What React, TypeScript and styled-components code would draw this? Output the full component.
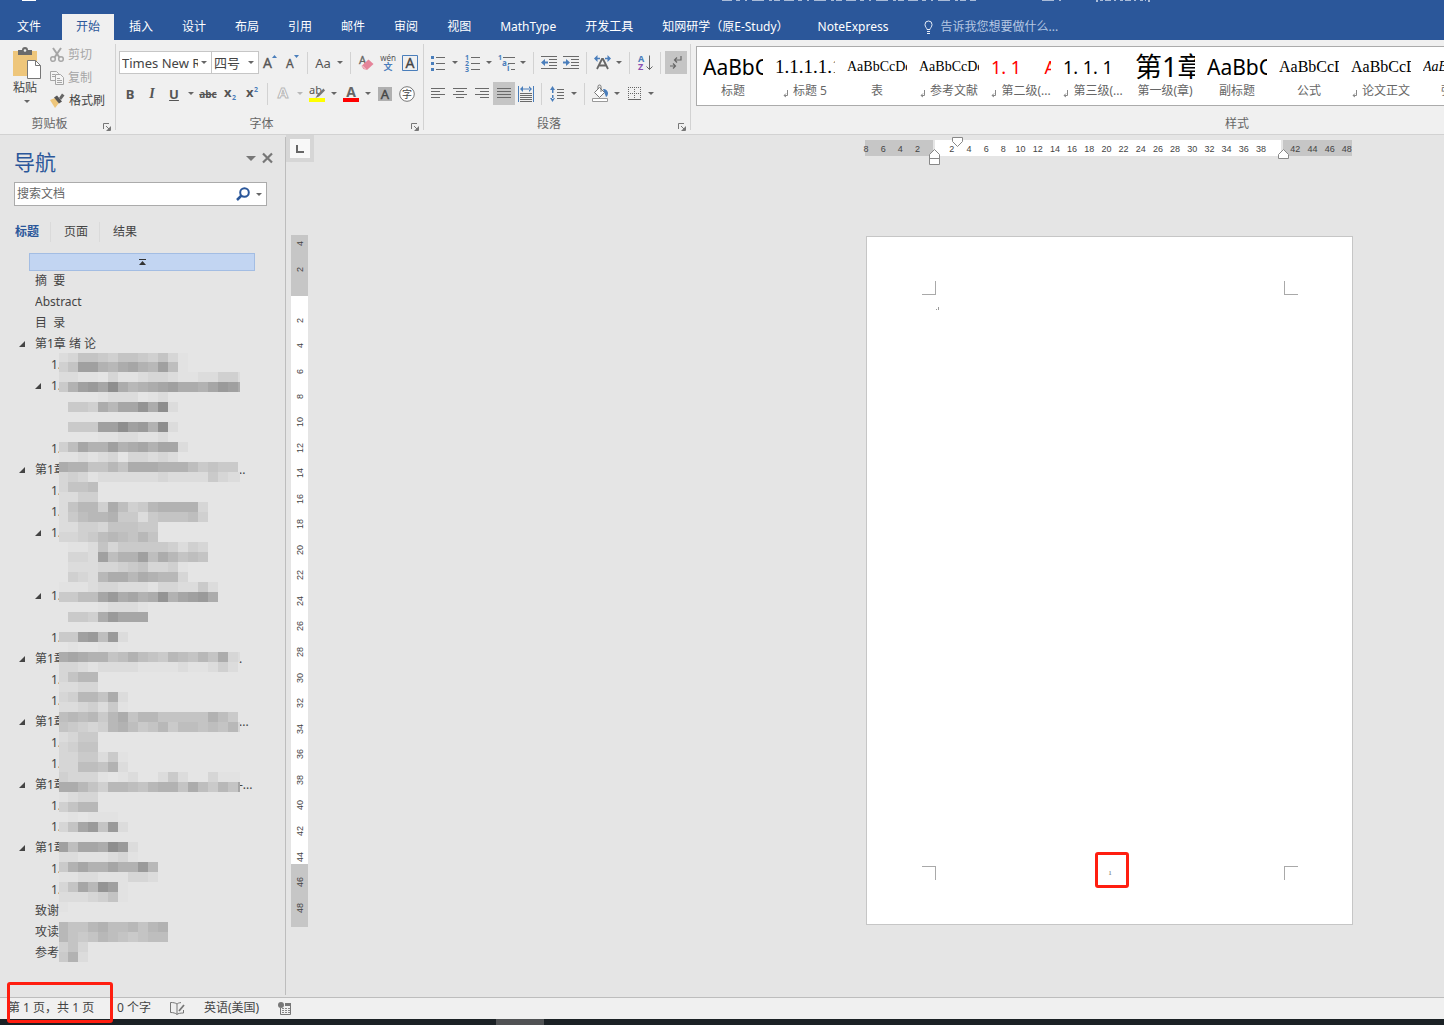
import React from "react";
import styled, { createGlobalStyle, css } from "styled-components";

const UI_FONT = `"Noto Sans", "Noto Sans CJK SC", sans-serif`;
const SERIF = `"Liberation Serif", "Noto Sans CJK SC", serif`;

const c = {
  brand: "#2b579a",
  ribbon: "#f0f0f0",
  line: "#d2d2d2",
  desk: "#e5e5e5",
  text: "#444444",
  muted: "#666666",
  disabled: "#a6a6a6",
  accent: "#4a7ebb",
  icon: "#6a6a6a",
  alert: "#ff1e10",
};

const Global = createGlobalStyle`
  *, *::before, *::after { box-sizing: border-box; }
  body { margin: 0; background: ${c.desk}; }
  button, input, select { font: inherit; color: inherit; }
  button { border: 0; padding: 0; background: none; cursor: default; }
  svg { display: block; flex: none; overflow: visible; }
`;

const Shell = styled.div`
  display: flex;
  flex-direction: column;
  min-height: 100vh;
  overflow: hidden;
  font: 12px/16px ${UI_FONT};
  color: ${c.text};
`;

/* ---------- title bar and ribbon tabs ---------- */

const Header = styled.header`
  display: flex;
  flex-direction: column;
  height: 40px;
  background: ${c.brand};
`;

const TitleStrip = styled.div`
  height: 14px;
  overflow: hidden;
`;

const TabBar = styled.nav`
  display: flex;
  height: 26px;
  gap: 1px;
  color: #fff;
`;

const Tab = styled.button<{ $active?: boolean; $file?: boolean }>`
  padding: 0 ${(p) => (p.$file ? 17 : 14)}px;
  margin-right: ${(p) => (p.$file ? 3 : 0)}px;
  white-space: nowrap;
  line-height: 24px;
  ${(p) =>
    p.$active &&
    css`
      background: ${c.ribbon};
      color: ${c.brand};
    `}
`;

const TellMe = styled.button`
  display: flex;
  align-items: center;
  gap: 6px;
  padding: 0 20px;
  white-space: nowrap;
  color: #b5c7e3;
`;

/* ---------- ribbon ---------- */

const Ribbon = styled.section`
  display: flex;
  height: 95px;
  padding-top: 4px;
  background: ${c.ribbon};
  border-bottom: 1px solid ${c.line};
`;

const Group = styled.div<{ $w?: number }>`
  display: flex;
  flex-direction: column;
  flex: ${(p) => (p.$w ? `0 0 ${p.$w}px` : "1 1 0")};
  min-width: 0;
  height: 86px;
  border-right: ${(p) => (p.$w ? `1px solid ${c.line}` : "0")};
`;

const GroupBody = styled.div`
  flex: 1;
  padding: 7px 0 0 3px;
`;

const GroupFoot = styled.div`
  display: flex;
  justify-content: center;
  position: relative;
  height: 16px;
  padding: 1px 16px 0 0;
  margin-bottom: -1px;
  color: ${c.muted};
`;

const StylesFoot = styled(GroupFoot)`
  justify-content: flex-end;
  margin-top: auto;
  padding-right: 195px;
`;

const Launcher = styled.button`
  position: absolute;
  right: 4px;
  bottom: 0;
`;

const ToolRow = styled.div`
  display: flex;
  align-items: center;
  height: 23px;
  margin-bottom: 8px;
`;

const Tool = styled.button<{ $on?: boolean }>`
  display: flex;
  align-items: center;
  justify-content: center;
  flex: none;
  width: 22px;
  height: 23px;
  background: ${(p) => (p.$on ? "#c5c5c5" : "transparent")};
`;

const CaretButton = styled.button`
  display: flex;
  align-items: center;
  justify-content: center;
  width: 12px;
  height: 23px;
`;

const Separator = styled.span`
  flex: none;
  width: 1px;
  height: 22px;
  margin: 0 4px;
  background: ${c.line};
`;

const Combo = styled.label<{ $w: number }>`
  display: flex;
  align-items: center;
  width: ${(p) => p.$w}px;
  height: 23px;
  padding-right: 4px;
  background: #fff;
  border: 1px solid #c6c6c6;
  & + & { margin-left: -1px; }
`;

const ComboSelect = styled.select`
  flex: 1;
  min-width: 0;
  height: 21px;
  padding: 0 0 0 2px;
  border: 0;
  outline: 0;
  appearance: none;
  background: transparent;
  font-size: 13px;
  text-overflow: clip;
  margin-right: 3px;
`;

const Clip = styled.div`
  display: flex;
  padding: 4px 0 0 12px;
  gap: 8px;
  flex: 1;
`;

const PasteButton = styled.button`
  display: flex;
  flex-direction: column;
  align-items: center;
  width: 30px;
  height: 60px;
`;

const PasteLabel = styled.span`
  margin-right: 4px;
  padding-bottom: 4px;
`;

const ClipList = styled.div`
  display: flex;
  flex-direction: column;
  margin-top: -5px;
`;

const ClipButton = styled.button<{ $off?: boolean }>`
  display: flex;
  align-items: center;
  gap: 4px;
  height: 23px;
  white-space: nowrap;
  color: ${(p) => (p.$off ? c.disabled : c.text)};
`;

const Glyph = styled.span<{ $size?: number; $color?: string; $bold?: boolean; $italic?: boolean; $line?: string }>`
  font-size: ${(p) => p.$size ?? 13}px;
  font-weight: ${(p) => (p.$bold ? 700 : 400)};
  font-style: ${(p) => (p.$italic ? "italic" : "normal")};
  font-family: ${(p) => (p.$italic ? SERIF : UI_FONT)};
  color: ${(p) => p.$color ?? "#555"};
  text-decoration: ${(p) => p.$line ?? "none"};
  line-height: 16px;
`;

const Gallery = styled.div`
  display: flex;
  height: 60px;
  margin: 2px 0 0 5px;
  overflow: hidden;
  background: #fff;
  border: 1px solid #ababab;
  border-right: 0;
`;

const StyleCard = styled.button`
  display: flex;
  flex-direction: column;
  align-items: center;
  flex: 0 0 72px;
  height: 58px;
  padding-top: 4px;
`;

const Preview = styled.span<{ $size: number; $serif?: boolean; $color?: string; $italic?: boolean }>`
  display: block;
  width: 60px;
  height: 32px;
  overflow: hidden;
  white-space: pre;
  text-align: left;
  font-family: ${(p) => (p.$serif ? SERIF : UI_FONT)};
  font-size: ${(p) => p.$size}px;
  font-style: ${(p) => (p.$italic ? "italic" : "normal")};
  line-height: 32px;
  color: ${(p) => p.$color ?? "#000"};
`;

const StyleName = styled.span`
  display: flex;
  gap: 4px;
  white-space: nowrap;
  color: ${c.muted};
`;

/* ---------- workspace ---------- */

const Workspace = styled.main`
  display: flex;
  flex: 1;
`;

const NavPane = styled.aside`
  flex: 0 0 286px;
  margin: 2px 0;
  border-right: 1px solid #bdbdbd;
`;

const PaneHead = styled.div`
  display: flex;
  align-items: center;
  gap: 6px;
  height: 45px;
  padding: 4px 12px 0 14px;
`;

const PaneTitle = styled.h2`
  flex: 1;
  margin: 0;
  font-size: 21px;
  line-height: 28px;
  font-weight: 400;
  color: ${c.brand};
`;

const PaneAction = styled.button`
  height: 20px;
  margin-bottom: 7px;
`;

const SearchBox = styled.div`
  display: flex;
  align-items: center;
  gap: 6px;
  height: 24px;
  margin: 0 18px 0 14px;
  padding: 0 4px 0 2px;
  background: #fff;
  border: 1px solid #ababab;
`;

const SearchInput = styled.input`
  flex: 1;
  min-width: 0;
  padding: 0;
  border: 0;
  outline: 0;
  background: transparent;
  &::placeholder { color: ${c.muted}; opacity: 1; }
`;

const PaneTabs = styled.div`
  display: flex;
  height: 20px;
  margin: 16px 0 11px 15px;
`;

const PaneTab = styled.button<{ $active?: boolean }>`
  padding-right: 11px;
  margin-right: 13px;
  font-weight: ${(p) => (p.$active ? 700 : 400)};
  color: ${(p) => (p.$active ? c.brand : c.text)};
  border-right: 1px solid #dadada;
  &:last-child { border-right: 0; }
`;

const JumpTop = styled.button`
  display: flex;
  align-items: center;
  justify-content: center;
  width: 226px;
  height: 18px;
  margin-left: 29px;
  background: #c2d5f2;
  border: 1px solid #a3bde3;
`;

const Outline = styled.div`
  position: relative;
  margin-top: -1px;
`;

const OutlineList = styled.ul`
  margin: 0;
  padding: 0;
  list-style: none;
`;

const OutlineRow = styled.li<{ $level: number }>`
  display: flex;
  align-items: center;
  height: 21px;
  padding-left: ${(p) => 3 + p.$level * 16}px;
`;

const Twist = styled.button`
  flex: none;
  width: 16px;
  height: 21px;
`;

const Heading = styled.a<{ $w?: number }>`
  flex: none;
  width: ${(p) => (p.$w ? `${p.$w}px` : "auto")};
  overflow: hidden;
  white-space: pre;
  color: inherit;
  text-decoration: none;
`;

const Tail = styled.span`
  margin-left: 180px;
`;

const Mosaic = styled.div`
  position: absolute;
  left: 59px;
  top: 83px;
  display: grid;
  grid-template-columns: 9px repeat(17, 10px) 2px;
  grid-template-rows: 9px;
  grid-auto-rows: 10px;
  pointer-events: none;
`;

const Tile = styled.i<{ $tone: string }>`
  background: ${(p) => p.$tone};
`;

const RulerColumn = styled.div`
  flex: none;
  width: 28px;
`;

const TabStop = styled.button`
  display: flex;
  align-items: center;
  justify-content: center;
  width: 28px;
  height: 27px;
  margin-bottom: 73px;
  background: #f8f8f8;
  border: 4px solid #d6d6d6;
`;

const VRuler = styled.div`
  display: flex;
  flex-direction: column;
  align-items: center;
  justify-content: space-between;
  width: 17px;
  height: 692px;
  margin-left: 5px;
  padding: 2px 0 13px;
  font: 9px/12px "Liberation Sans", sans-serif;
  background: linear-gradient(#c6c6c6 61px, #fff 61px, #fff 629px, #c6c6c6 629px);
`;

const VTick = styled.span`
  writing-mode: vertical-rl;
  transform: rotate(180deg);
  height: 12px;
  text-align: center;
`;

const Desk = styled.div`
  display: flex;
  flex: 1;
  flex-direction: column;
  align-items: flex-end;
  min-width: 0;
  padding: 5px 91px 72px 0;
`;

const HRuler = styled.div`
  position: relative;
  width: 487px;
  height: 16px;
  margin: 0 1px 80px 0;
  background: linear-gradient(90deg, #c6c6c6 68px, #e5e5e5 68px, #e5e5e5 70px, #fff 70px, #fff 416px, #e5e5e5 416px, #e5e5e5 418px, #c6c6c6 418px);
`;

const HTicks = styled.div`
  display: flex;
  justify-content: space-between;
  margin: 0 -1px 0 -5px;
  font: 9px/18px "Liberation Sans", sans-serif;
`;

const HTick = styled.span`
  width: 12px;
  text-align: center;
`;

const Indent = styled.svg<{ $x: number; $y: number }>`
  position: absolute;
  left: ${(p) => p.$x}px;
  top: ${(p) => p.$y}px;
`;

const Page = styled.article`
  display: flex;
  flex-direction: column;
  width: 487px;
  height: 689px;
  padding: 44px 54px 44px 55px;
  background: #fff;
  border: 1px solid #c6c6c6;
`;

const MarkRow = styled.div`
  display: flex;
  justify-content: space-between;
  height: 14px;
`;

const Mark = styled.span<{ $edges: string }>`
  width: 14px;
  height: 14px;
  border: 0 solid #a9a9a9;
  border-width: ${(p) => p.$edges};
`;

const Body = styled.div`
  flex: 1;
  padding: 11px 0 0 14px;
`;

const PageNumber = styled.span`
  position: relative;
  font: 7px/14px ${SERIF};
  color: #666;
`;

const Callout = styled.span<{ $x: number; $y: number; $w: number; $h: number }>`
  position: absolute;
  left: ${(p) => p.$x}px;
  top: ${(p) => p.$y}px;
  width: ${(p) => p.$w}px;
  height: ${(p) => p.$h}px;
  border: 3px solid ${c.alert};
  border-radius: 3px;
  pointer-events: none;
`;

/* ---------- status bar ---------- */

const StatusBar = styled.footer`
  position: relative;
  display: flex;
  align-items: center;
  gap: 19px;
  height: 22px;
  padding: 0 0 1px 8px;
  background: ${c.ribbon};
  border-top: 1px solid #bdbdbd;
`;

const StatusItem = styled.button`
  white-space: nowrap;
  text-align: left;
  &:first-child { min-width: 90px; }
`;

const Taskbar = styled.div`
  display: flex;
  height: 6px;
  padding-left: 496px;
  background: #1b2125;
`;

const TaskSlot = styled.span`
  width: 48px;
  background: #505254;
`;

/* ---------- icons ---------- */

const Caret = ({ color = "#666", w = 6 }: { color?: string; w?: number }) => (
  <svg width={w} height={Math.ceil(w / 2)} viewBox="0 0 10 6" preserveAspectRatio="none">
    <path d="M0 0h10L5 6z" fill={color} />
  </svg>
);

const More = ({ color, name }: { color?: string; name: string }) => (
  <CaretButton aria-label={name}>
    <Caret color={color} />
  </CaretButton>
);

const DialogIcon = () => (
  <svg width="8" height="8" viewBox="0 0 8 8" fill="none" stroke="#777">
    <path d="M.5 6V.5H6M3 3l3 3M7.500 3.500v4h-4" />
    <path d="M7 4v3H4z" fill="#777" stroke="none" />
  </svg>
);

const PasteIcon = () => (
  <svg width="30" height="32" viewBox="0 0 30 32">
    <path d="M1 3h24v25H1z" fill="#eec67b" />
    <path d="M6 2h4a3 3 0 0 1 6 0h4v5H6z" fill="#6b6b6b" />
    <circle cx="13" cy="2.500" r="1.300" fill="#f0f0f0" />
    <path d="M15.500 12.500h8l5 5v13h-13z" fill="#fff" stroke="#777" />
    <path d="M23.500 12.500v5h5" fill="none" stroke="#777" />
  </svg>
);

const CutIcon = () => (
  <svg width="14" height="16" viewBox="0 0 14 16" fill="none" stroke="#a6a6a6">
    <path d="M3 1l6.500 9.500M11 1L4.500 10.500" strokeWidth="2" />
    <circle cx="3" cy="12" r="2.300" strokeWidth="1.500" />
    <circle cx="11" cy="12" r="2.300" strokeWidth="1.500" />
  </svg>
);

const CopyIcon = () => (
  <svg width="14" height="14" viewBox="0 0 14 14" fill="#f4f4f4" stroke="#a6a6a6">
    <path d="M.5.5h6l2 2v7h-8z" />
    <path d="M2 3.500h3M2 5.500h3" />
    <path d="M5.500 3.500h5l3 3v7h-8z" />
    <path d="M7 7.500h3M7 9.500h5M7 11.500h5" />
  </svg>
);

const BrushIcon = () => (
  <svg width="15" height="15" viewBox="0 0 15 15">
    <path d="M0 7l5-2 4 5-4 5z" fill="#eec67b" />
    <path d="M4 4.500l3-2 5 6-3 2z" fill="#555" />
    <path d="M9 5l3-4.500 2.500 2L11 7z" fill="#666" />
  </svg>
);

const GrowFont = ({ down }: { down?: boolean }) => (
  <svg width="18" height="20" viewBox="0 0 18 20">
    <text x={down ? 3 : 2} y="15" fontSize={down ? 12 : 14} fill="#555" stroke="#555" strokeWidth="0.300" fontFamily="Noto Sans">A</text>
    <path d={down ? "M11 2h5l-2.500 3z" : "M11 5h5l-2.500-3z"} fill={c.accent} />
  </svg>
);

const EraserIcon = () => (
  <svg width="16" height="18" viewBox="0 0 16 18">
    <text x="1" y="10" fontSize="11" fill="#666" stroke="#666" strokeWidth="0.300" fontFamily="Noto Sans">A</text>
    <path d="M10.500 5.500l5 4.500-6.500 6-3.500-1-2-3z" fill="#e5849a" />
    <path d="M4 11.500l4 4" stroke="#f7d6dd" />
  </svg>
);

const PhoneticIcon = () => (
  <svg width="18" height="20" viewBox="0 0 18 20">
    <text x="9" y="8" textAnchor="middle" fontSize="8" fill="#555" fontFamily="Noto Sans">wén</text>
    <text x="9" y="17" textAnchor="middle" fontSize="9" fontWeight="700" fill={c.accent} fontFamily="Noto Sans CJK SC">文</text>
  </svg>
);

const BoxedA = () => (
  <svg width="16" height="16" viewBox="0 0 16 16">
    <path d="M.5.5h15v15H.5z" fill="none" stroke={c.accent} />
    <text x="8" y="13" textAnchor="middle" fontSize="14" fill="#444" stroke="#444" strokeWidth="0.300" fontFamily="Noto Sans">A</text>
  </svg>
);

const Script = ({ up }: { up?: boolean }) => (
  <svg width="14" height="16" viewBox="0 0 14 16">
    <text x="1" y="11" fontSize="13" fontWeight="700" fill="#555" fontFamily="Noto Sans">x</text>
    <text x="9" y={up ? 6 : 14} fontSize="7" fontWeight="700" fill={c.accent} fontFamily="Noto Sans">2</text>
  </svg>
);

const OutlineA = () => (
  <svg width="16" height="17" viewBox="0 0 16 17">
    <text x="8" y="13" textAnchor="middle" fontSize="15" fontWeight="700" fill="#fff" stroke="#b8b8b8" strokeWidth="1" fontFamily="Noto Sans">A</text>
  </svg>
);

const HighlightIcon = () => (
  <svg width="18" height="18" viewBox="0 0 18 18">
    <text x="1" y="9" fontSize="11" fill="#555" fontFamily="Noto Sans">ab</text>
    <path d="M15.500 3.500l-6 6-2 3.500 3.500-1.500 6-6z" fill="#777" />
    <path d="M1 13h16v4H1z" fill="#ff0" />
  </svg>
);

const FontColorIcon = () => (
  <svg width="18" height="18" viewBox="0 0 18 18">
    <text x="9" y="12" textAnchor="middle" fontSize="14" fontWeight="700" fill="#666" fontFamily="Noto Sans">A</text>
    <path d="M1 13h16v4H1z" fill="#f00" />
  </svg>
);

const ShadedA = () => (
  <svg width="14" height="14" viewBox="0 0 14 14">
    <path d="M0 0h14v14H0z" fill="#b0b0b0" />
    <text x="7" y="12" textAnchor="middle" fontSize="13" fill="#444" stroke="#444" strokeWidth="0.400" fontFamily="Noto Sans">A</text>
  </svg>
);

const CircledIcon = () => (
  <svg width="16" height="16" viewBox="0 0 16 16">
    <circle cx="8" cy="8" r="7.300" fill="#fff" stroke="#777" />
    <text x="8" y="12" textAnchor="middle" fontSize="10" fill="#444" fontFamily="Noto Sans CJK SC">字</text>
  </svg>
);

const BulletsIcon = () => (
  <svg width="14" height="16" viewBox="0 0 14 16">
    <path d="M0 1h3v3H0zM0 7h3v3H0zM0 13h3v3H0z" fill={c.accent} />
    <path d="M5 2.500h9M5 8.500h9M5 14.500h9" stroke={c.icon} />
  </svg>
);

const NumbersIcon = () => (
  <svg width="15" height="18" viewBox="0 0 15 18">
    {["1", "2", "3"].map((n, i) => (
      <text key={n} x="0" y={6 + i * 6} fontSize="7" fontWeight="700" fill={c.accent} fontFamily="Noto Sans">{n}</text>
    ))}
    <path d="M6 3.500h9M6 9.500h9M6 15.500h9" stroke={c.icon} />
  </svg>
);

const LevelsIcon = () => (
  <svg width="17" height="18" viewBox="0 0 17 18">
    <text x="0" y="6" fontSize="7" fontWeight="700" fill={c.accent} fontFamily="Noto Sans">1</text>
    <text x="4" y="12" fontSize="8" fontWeight="700" fill={c.accent} fontFamily="Noto Sans">a</text>
    <text x="9" y="17" fontSize="8" fontWeight="700" fill={c.accent} fontFamily="Noto Sans">i</text>
    <path d="M5 3.500h12M10 9.500h7M13 15.500h4" stroke={c.icon} />
  </svg>
);

const DentIcon = ({ inward }: { inward?: boolean }) => (
  <svg width="16" height="14" viewBox="0 0 16 14">
    <path d="M0 .5h16M8 3.500h8M8 6.500h8M8 9.500h8M0 12.500h16" stroke={c.icon} />
    <path d={inward ? "M0 5.500h3V3l4 3.500L3 10V7.500H0z" : "M7 5.500H4V3L0 6.500 4 10V7.500h3z"} fill={c.accent} />
  </svg>
);

const AsianLayoutIcon = () => (
  <svg width="17" height="15" viewBox="0 0 17 15">
    <path d="M3 14L8 4h1l5 10M5 10.500h7" fill="none" stroke="#666" strokeWidth="1.800" />
    <path d="M6 3.500H2M11 3.500h4" stroke={c.accent} strokeWidth="1.500" />
    <path d="M0 3.500L3.500 0v7zM17 3.500L13.500 0v7z" fill={c.accent} />
  </svg>
);

const SortIcon = () => (
  <svg width="15" height="18" viewBox="0 0 15 18">
    <text x="0" y="8" fontSize="9" fontWeight="700" fill={c.accent} fontFamily="Noto Sans">A</text>
    <text x="0" y="16" fontSize="9" fontWeight="700" fill="#8a4fb0" fontFamily="Noto Sans">Z</text>
    <path d="M11.500 1.500v14M8.500 12.500l3 3 3-3" fill="none" stroke="#666" />
  </svg>
);

const MarksIcon = () => (
  <svg width="12" height="15" viewBox="0 0 12 15" fill="none" stroke="#666" strokeWidth="1.200">
    <path d="M11 1v4H5M7 2.500L4.500 5 7 7.500M0 11h5M3 8.500L5.500 11 3 13.500" />
  </svg>
);

const alignPaths: Record<string, string> = {
  left: "M0 .5h14M0 3.500h9M0 6.500h14M0 9.500h9",
  center: "M0 .5h14M3 3.500h8M0 6.500h14M3 9.500h8",
  right: "M0 .5h14M5 3.500h9M0 6.500h14M5 9.500h9",
  justify: "M0 .5h14M0 3.500h14M0 6.500h14M0 9.500h14",
};

const AlignIcon = ({ kind }: { kind: string }) => (
  <svg width="14" height="11" viewBox="0 0 14 11" stroke={c.icon}>
    <path d={alignPaths[kind]} />
  </svg>
);

const DistributeIcon = () => (
  <svg width="16" height="16" viewBox="0 0 16 16">
    <path d="M.5 0v16M15.500 0v16" stroke={c.accent} />
    <path d="M2 3l3-3v6zM14 3l-3-3v6zM4 2.500h8v1H4z" fill={c.accent} />
    <path d="M2 7.500h12M2 9.500h12M2 11.500h12M2 13.500h12M2 15.500h12" stroke={c.icon} />
  </svg>
);

const SpacingIcon = () => (
  <svg width="14" height="16" viewBox="0 0 14 16">
    <path d="M0 4l2.500-4L5 4zM0 12l2.500 4L5 12zM2 3h1.500v4H2zM2 9h1.500v4H2z" fill={c.accent} />
    <path d="M7 3.500h7M7 6.500h7M7 9.500h7M7 12.500h7" stroke={c.icon} />
  </svg>
);

const BucketIcon = () => (
  <svg width="17" height="17" viewBox="0 0 17 17">
    <path d="M2.500 7.500l5-5 5 5-5 5z" fill="#fff" stroke="#777" />
    <path d="M6 4V1.500a1.500 1.500 0 0 1 3 0V7" fill="none" stroke="#777" />
    <path d="M11 4c3 0 5 2 5 4.500 0 1.500-1 3-2 3.500z" fill={c.accent} />
    <path d="M.5 13.500h15v3H.5z" fill="#fff" stroke="#999" />
  </svg>
);

const BordersIcon = () => (
  <svg width="13" height="13" viewBox="0 0 13 13" stroke="#666" fill="none">
    <path d="M0 .5h13M0 6.500h13M.5 0v12M6.500 0v12M12.500 0v12" strokeDasharray="1 1" />
    <path d="M0 12.500h13" />
  </svg>
);

const BulbIcon = () => (
  <svg width="11" height="14" viewBox="0 0 11 14" fill="none" stroke="#e8eef8">
    <path d="M4 9.500C4 8 2 7 2 4.500a3.500 3.500 0 0 1 7 0C9 7 7 8 7 9.500zM4 11.500h3M4 13.500h3" />
  </svg>
);

const SearchIcon = () => (
  <svg width="14" height="14" viewBox="0 0 14 14" fill="none" stroke={c.brand} strokeWidth="2">
    <circle cx="8.500" cy="5.500" r="4.300" />
    <path d="M5.500 8.500L1 13" strokeWidth="2.500" />
  </svg>
);

const CloseIcon = () => (
  <svg width="11" height="10" viewBox="0 0 11 10" stroke="#777" strokeWidth="2.200">
    <path d="M1 0.500l9 9M10 .5l-9 9" />
  </svg>
);

const LinkedMark = () => (
  <svg width="6" height="16" viewBox="0 0 6 16" fill="none" stroke="#888">
    <path d="M4.500 7v5.500H1M3 10.500l-2 2 2 1.500" />
  </svg>
);

const ProofIcon = () => (
  <svg width="15" height="13" viewBox="0 0 15 13" fill="none" stroke="#777">
    <path d="M7 12.500V2C5.500.8 3 .5.5.5v10c2.500 0 5 .5 6.500 2 1-1 3-1.500 6.500-1.500V8M7 2c.8-.8 2-1.200 4-1.400" />
    <path d="M9 9l5-6" strokeWidth="1.800" />
  </svg>
);

const MacroIcon = () => (
  <svg width="13" height="13" viewBox="0 0 13 13">
    <path d="M2.500 6v6.500h10V3" fill="none" stroke="#777" />
    <path d="M7 1h6v3H7z" fill="#777" />
    <circle cx="3" cy="3" r="3" fill="#777" />
    <path d="M4 6.500h8M4 8.500h8M4 10.500h8" stroke="#888" strokeDasharray="2 1" />
  </svg>
);

/* ---------- data ---------- */

const tabs = ["插入", "设计", "布局", "引用", "邮件", "审阅", "视图", "MathType", "开发工具", "知网研学（原E-Study）", "NoteExpress"];

type CardData = { sample: string; name: string; size: number; serif?: boolean; color?: string; linked?: boolean; italic?: boolean };

const cards: CardData[] = [
  { sample: "AaBbC", name: "标题", size: 21 },
  { sample: "1.1.1.1.1", name: "标题 5", size: 19, serif: true, linked: true },
  { sample: "AaBbCcDd", name: "表", size: 14, serif: true },
  { sample: "AaBbCcDd", name: "参考文献", size: 14, serif: true, linked: true },
  { sample: "1. 1     A", name: "第二级(...", size: 18, color: "#f00", linked: true },
  { sample: "1. 1. 1", name: "第三级(...", size: 18, linked: true },
  { sample: "第1章", name: "第一级(章)", size: 27 },
  { sample: "AaBbC", name: "副标题", size: 21 },
  { sample: "AaBbCcD", name: "公式", size: 16, serif: true },
  { sample: "AaBbCcD", name: "论文正文", size: 16, serif: true, linked: true },
  { sample: "AaBbCc", name: "强调", size: 14, serif: true, italic: true },
];

type OutlineItem = { text?: string; level?: number; open?: boolean; masked?: boolean; tail?: string };
const chapter = (tail?: string): OutlineItem => ({ text: "第1章", level: 1, open: true, masked: true, tail });
const section = (open = false): OutlineItem => ({ text: "1.", level: 2, open, masked: true });
const hidden: OutlineItem = {};

const outline: OutlineItem[] = [
  { text: "摘  要" },
  { text: "Abstract" },
  { text: "目  录" },
  { text: "第1章 绪 论", open: true },
  section(), section(true), hidden, hidden, section(),
  chapter(".."),
  section(), section(), section(true), hidden, hidden, section(true), hidden, section(),
  chapter("."),
  section(), section(),
  chapter("..."),
  section(), section(),
  chapter("-..."),
  section(), section(),
  chapter(),
  section(), section(),
  { text: "致谢" },
  { text: "攻读", masked: true },
  { text: "参考", masked: true },
];

/* One string per band of the redaction; each character is a shade, a dot is clear. */
const mosaic = [
  "1255435543520", "35bb879a87b60", "1100.200122100113310", "48bcae9789ab998acb94", "....0111.01",
  ".44397aad9e1", "", ".444bbebc8e1", "....0011001", "36a88b89a8aa1",
  "001012.22121", "988557599988864544", "2320111111211114211", "2556", "1133",
  "157739634788882", "146778441455563", "1133255544", "2234676575", ".00152444443132",
  ".221b688b697565", ".111223452230", ".321799798772", "0001221110221141", "4466ac9a89d8abc9",
  "....01110", ".4439caaa", "", "44bc6c1", ".0..00",
  "9a98856865476575921", "221011110000100131", "2577", "1122", "2377591",
  "1123140", "676747957755555864", "5432378645746656572", "1244", "2355",
  "2244140", "2266581", "32220.01..141..2000", "997537765788596475a", "0122",
  "3577", ".0.000", "25ac5c1", "", "b6aa9ec1",
  "11000120", "48a88a88c7", "0011000221", "25a7db0", "1112350",
  "0", "", "75578667578", "75457654566", "352", "481",
];

const tone = (ch: string) => {
  if (ch === ".") return "transparent";
  const v = 226 - parseInt(ch, 16) * 6;
  return `rgb(${v},${v},${v})`;
};

const vTicks = ["4", "2", "", ...Array.from({ length: 24 }, (_, i) => String(2 + i * 2))];
const hTicks = ["8", "6", "4", "2", "", ...Array.from({ length: 24 }, (_, i) => (i === 19 ? "" : String(2 + i * 2)))];

/* ---------- parts ---------- */

const RibbonGroup = ({ name, w, children }: { name: string; w?: number; children: React.ReactNode }) => (
  <Group $w={w}>
    {children}
    <GroupFoot>
      {name}
      <Launcher aria-label={`${name}设置`}>
        <DialogIcon />
      </Launcher>
    </GroupFoot>
  </Group>
);

const FontGroup = () => (
  <GroupBody>
    <ToolRow>
      <Combo $w={93}>
        <ComboSelect aria-label="字体" defaultValue="Times New Roman">
          <option>Times New Roman</option>
        </ComboSelect>
        <Caret />
      </Combo>
      <Combo $w={48}>
        <ComboSelect aria-label="字号" defaultValue="四号">
          <option>四号</option>
        </ComboSelect>
        <Caret />
      </Combo>
      <Tool aria-label="增大字号"><GrowFont /></Tool>
      <Tool aria-label="减小字号"><GrowFont down /></Tool>
      <Separator />
      <Tool aria-label="更改大小写"><Glyph>Aa</Glyph></Tool>
      <More name="大小写选项" />
      <Separator />
      <Tool aria-label="清除格式"><EraserIcon /></Tool>
      <Tool aria-label="拼音指南"><PhoneticIcon /></Tool>
      <Tool aria-label="字符边框"><BoxedA /></Tool>
    </ToolRow>
    <ToolRow>
      <Tool aria-label="加粗"><Glyph $bold>B</Glyph></Tool>
      <Tool aria-label="倾斜"><Glyph $italic $bold $size={14}>I</Glyph></Tool>
      <Tool aria-label="下划线"><Glyph $bold $line="underline">U</Glyph></Tool>
      <More name="下划线选项" />
      <Tool aria-label="删除线"><Glyph $size={10} $bold $line="line-through">abc</Glyph></Tool>
      <Tool aria-label="下标"><Script /></Tool>
      <Tool aria-label="上标"><Script up /></Tool>
      <Separator />
      <Tool aria-label="文本效果"><OutlineA /></Tool>
      <More name="文本效果选项" color="#b8b8b8" />
      <Tool aria-label="突出显示"><HighlightIcon /></Tool>
      <More name="突出显示选项" />
      <Tool aria-label="字体颜色"><FontColorIcon /></Tool>
      <More name="字体颜色选项" />
      <Tool aria-label="字符底纹"><ShadedA /></Tool>
      <Tool aria-label="带圈字符"><CircledIcon /></Tool>
    </ToolRow>
  </GroupBody>
);

const ParagraphGroup = () => (
  <GroupBody>
    <ToolRow>
      <Tool aria-label="项目符号"><BulletsIcon /></Tool>
      <More name="项目符号选项" />
      <Tool aria-label="编号"><NumbersIcon /></Tool>
      <More name="编号选项" />
      <Tool aria-label="多级列表"><LevelsIcon /></Tool>
      <More name="多级列表选项" />
      <Separator />
      <Tool aria-label="减少缩进量"><DentIcon /></Tool>
      <Tool aria-label="增加缩进量"><DentIcon inward /></Tool>
      <Separator />
      <Tool aria-label="中文版式"><AsianLayoutIcon /></Tool>
      <More name="中文版式选项" />
      <Separator />
      <Tool aria-label="排序"><SortIcon /></Tool>
      <Separator />
      <Tool $on aria-label="显示编辑标记"><MarksIcon /></Tool>
    </ToolRow>
    <ToolRow>
      <Tool aria-label="左对齐"><AlignIcon kind="left" /></Tool>
      <Tool aria-label="居中"><AlignIcon kind="center" /></Tool>
      <Tool aria-label="右对齐"><AlignIcon kind="right" /></Tool>
      <Tool $on aria-label="两端对齐"><AlignIcon kind="justify" /></Tool>
      <Tool aria-label="分散对齐"><DistributeIcon /></Tool>
      <Separator />
      <Tool aria-label="行距"><SpacingIcon /></Tool>
      <More name="行距选项" />
      <Separator />
      <Tool aria-label="底纹"><BucketIcon /></Tool>
      <More name="底纹选项" />
      <Tool aria-label="边框"><BordersIcon /></Tool>
      <More name="边框选项" />
    </ToolRow>
  </GroupBody>
);

const NavigationPane = () => (
  <NavPane>
    <PaneHead>
      <PaneTitle>导航</PaneTitle>
      <PaneAction aria-label="窗格选项"><Caret w={10} color="#777" /></PaneAction>
      <PaneAction aria-label="关闭"><CloseIcon /></PaneAction>
    </PaneHead>
    <SearchBox>
      <SearchInput type="text" aria-label="搜索文档" placeholder="搜索文档" />
      <button aria-label="搜索"><SearchIcon /></button>
      <button aria-label="搜索选项"><Caret /></button>
    </SearchBox>
    <PaneTabs>
      <PaneTab $active>标题</PaneTab>
      <PaneTab>页面</PaneTab>
      <PaneTab>结果</PaneTab>
    </PaneTabs>
    <JumpTop aria-label="跳至开头">
      <svg width="7" height="6" viewBox="0 0 7 6" fill="#333"><path d="M0 0h7v1H0zM3.500 2L7 6H0z" /></svg>
    </JumpTop>
    <Outline>
      <OutlineList>
        {outline.map((item, i) => {
          const level = item.level ?? 1;
          return (
            <OutlineRow key={i} $level={level}>
              {item.text && (
                <>
                  <Twist as={item.open ? "button" : "span"} aria-label={item.open ? "折叠" : undefined}>
                    {item.open && <svg width="6" height="6" viewBox="0 0 7 7"><path d="M7 0v7H0z" fill="#444" /></svg>}
                  </Twist>
                  <Heading href="#" $w={item.masked ? (level === 1 ? 24 : 8) : undefined}>{item.text}</Heading>
                  {item.tail && <Tail>{item.tail}</Tail>}
                </>
              )}
            </OutlineRow>
          );
        })}
      </OutlineList>
      <Mosaic aria-hidden>
        {mosaic.map((band, r) =>
          band.padEnd(19, ".").slice(0, 19).split("").map((ch, k) => <Tile key={`${r}-${k}`} $tone={tone(ch)} />)
        )}
      </Mosaic>
    </Outline>
  </NavPane>
);

export default function App() {
  return (
    <Shell>
      <Global />
      <Header>
        <TitleStrip>
          <svg width="1200" height="3" viewBox="0 0 1200 3" stroke="#a9bbd8">
            <path d="M22 0h14" stroke="#fff" strokeWidth="2" />
            <path d="M722 .5h254" strokeDasharray="10 4 4 5 2 5 12 5 3 2 6 4" />
            <path d="M1042 .5h12M1059 .5h2" />
            <path d="M1096 1h2M1148 1h2" strokeWidth="2" />
            <path d="M1100 .5h46" strokeDasharray="3 2 6 3 2 4" />
          </svg>
        </TitleStrip>
        <TabBar>
          <Tab $file>文件</Tab>
          <Tab $active>开始</Tab>
          {tabs.map((t) => <Tab key={t}>{t}</Tab>)}
          <TellMe><BulbIcon />告诉我您想要做什么...</TellMe>
        </TabBar>
      </Header>

      <Ribbon>
        <RibbonGroup name="剪贴板" w={116}>
          <Clip>
            <PasteButton>
              <PasteIcon />
              <PasteLabel>粘贴</PasteLabel>
              <Caret />
            </PasteButton>
            <ClipList>
              <ClipButton $off><CutIcon />剪切</ClipButton>
              <ClipButton $off><CopyIcon />复制</ClipButton>
              <ClipButton><BrushIcon />格式刷</ClipButton>
            </ClipList>
          </Clip>
        </RibbonGroup>
        <RibbonGroup name="字体" w={308}><FontGroup /></RibbonGroup>
        <RibbonGroup name="段落" w={267}><ParagraphGroup /></RibbonGroup>
        <Group>
          <Gallery>
            {cards.map((card, i) => (
              <StyleCard key={i}>
                <Preview $size={card.size} $serif={card.serif} $color={card.color} $italic={card.italic}>{card.sample}</Preview>
                <StyleName>{card.linked && <LinkedMark />}{card.name}</StyleName>
              </StyleCard>
            ))}
          </Gallery>
          <StylesFoot>样式</StylesFoot>
        </Group>
      </Ribbon>

      <Workspace>
        <NavigationPane />
        <RulerColumn>
          <TabStop aria-label="制表符">
            <svg width="8" height="8" viewBox="0 0 8 8"><path d="M1 0v7h7" fill="none" stroke="#666" strokeWidth="2" /></svg>
          </TabStop>
          <VRuler>{vTicks.map((t, i) => <VTick key={i}>{t}</VTick>)}</VRuler>
        </RulerColumn>
        <Desk>
          <HRuler>
            <HTicks>{hTicks.map((t, i) => <HTick key={i}>{t}</HTick>)}</HTicks>
            <Indent $x={87} $y={-3} width="11" height="11" viewBox="0 0 11 11"><path d="M.5.5h10v4l-5 5-5-5z" fill="#fff" stroke="#888" /></Indent>
            <Indent $x={64} $y={9} width="11" height="16" viewBox="0 0 11 16"><path d="M.5 15.500v-10l5-5 5 5v10zM.5 9.500h10" fill="#fff" stroke="#888" /></Indent>
            <Indent $x={413} $y={9} width="11" height="11" viewBox="0 0 11 11"><path d="M.5 9.500v-4l5-5 5 5v4z" fill="#fff" stroke="#888" /></Indent>
          </HRuler>
          <Page>
            <MarkRow><Mark $edges="0 1px 1px 0" /><Mark $edges="0 0 1px 1px" /></MarkRow>
            <Body>
              <svg width="4" height="5" viewBox="0 0 4 5"><path d="M2 1h1v3H2zM0 3h1v1H0z" fill="#999" /></svg>
            </Body>
            <MarkRow>
              <Mark $edges="1px 1px 0 0" />
              <PageNumber>1<Callout $x={-13} $y={-14} $w={34} $h={36} /></PageNumber>
              <Mark $edges="1px 0 0 1px" />
            </MarkRow>
          </Page>
        </Desk>
      </Workspace>

      <StatusBar>
        <StatusItem>第 1 页，共 1 页</StatusItem>
        <StatusItem>0 个字</StatusItem>
        <StatusItem aria-label="校对"><ProofIcon /></StatusItem>
        <StatusItem>英语(美国)</StatusItem>
        <StatusItem aria-label="宏"><MacroIcon /></StatusItem>
        <Callout $x={7} $y={-16} $w={106} $h={41} />
      </StatusBar>
      <Taskbar><TaskSlot /></Taskbar>
    </Shell>
  );
}
